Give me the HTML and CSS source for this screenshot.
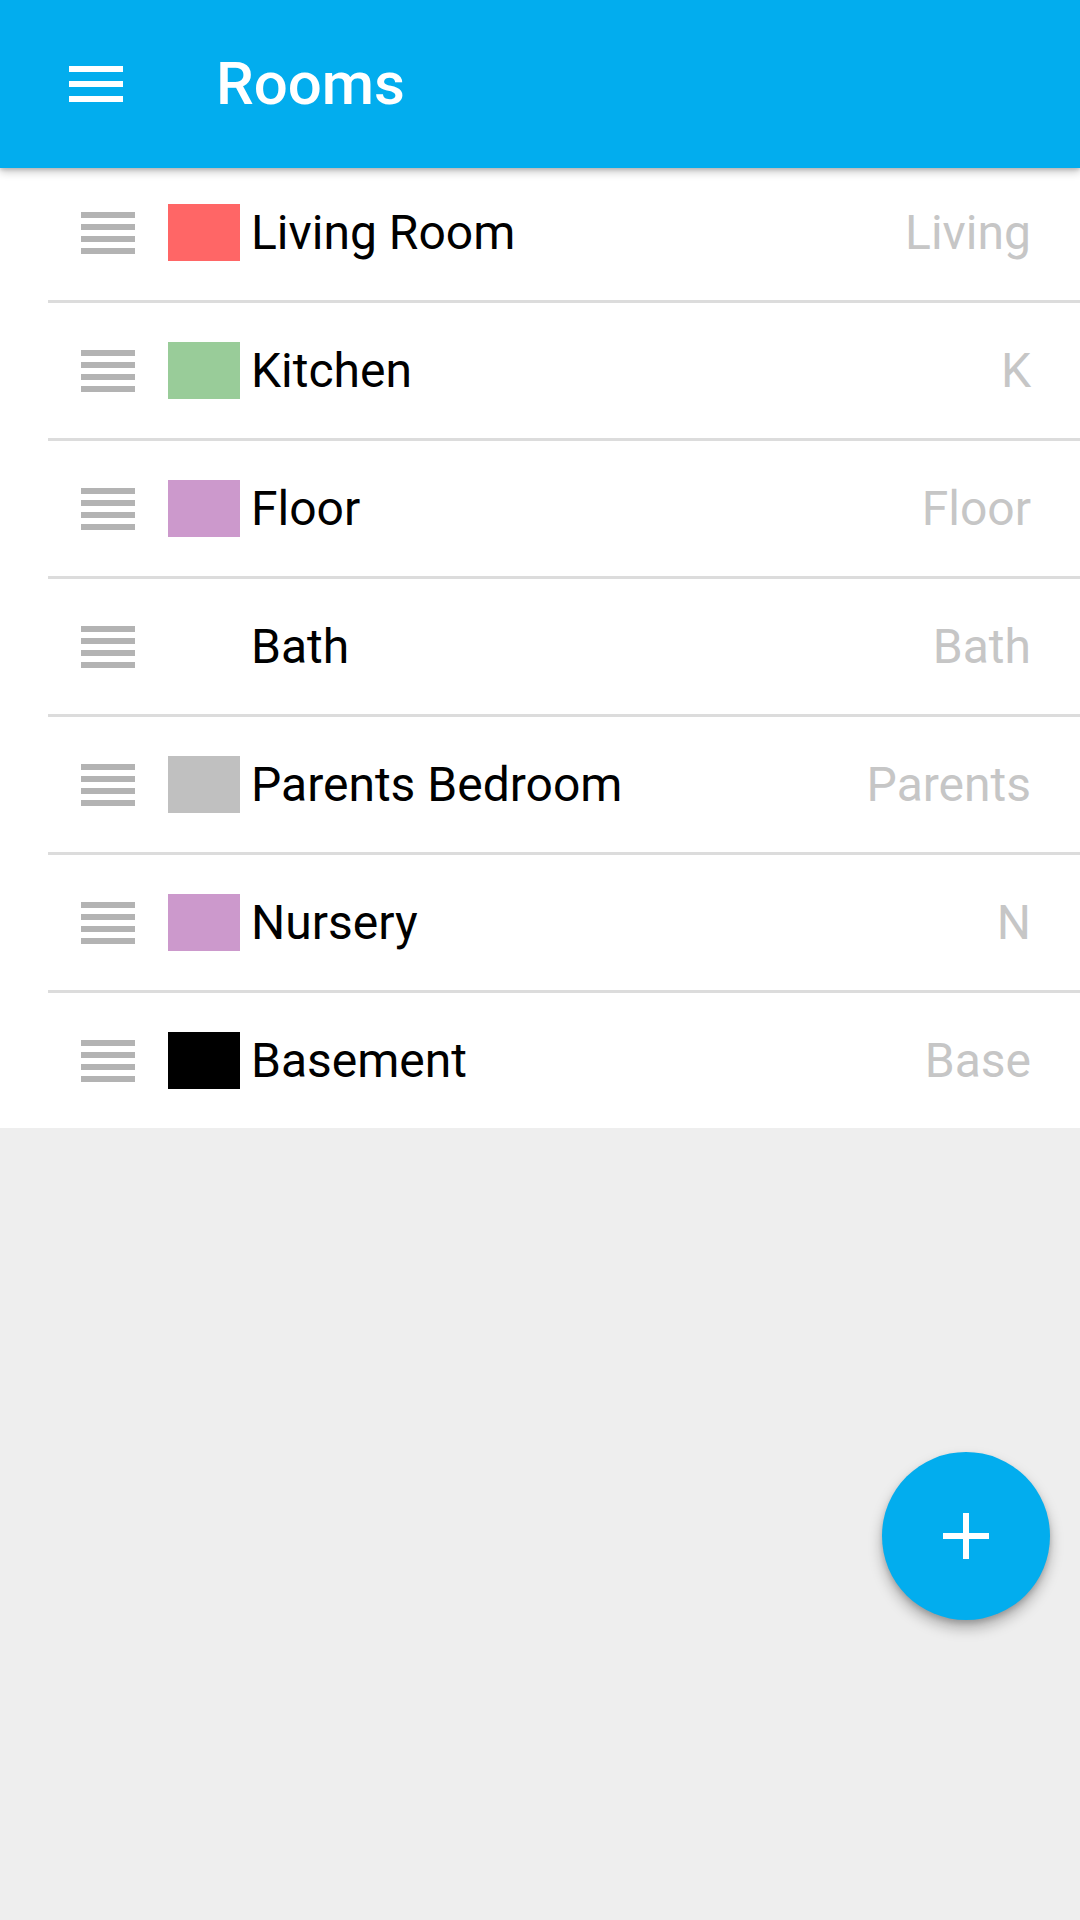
FILE: index.html
```html
<!DOCTYPE html>
<html lang="en">
<head>
<meta charset="utf-8">
<title>Rooms</title>
<link rel="stylesheet" href="styles.css">
</head>
<body>
<header class="toolbar">
  <svg class="menu-icon" viewBox="0 0 24 24" width="72" height="72" aria-hidden="true">
    <path fill="#ffffff" d="M3 18h18v-2H3v2zm0-5h18v-2H3v2zm0-7v2h18V6H3z"/>
  </svg>
  <h1 class="title">Rooms</h1>
</header>
<main class="list">
  <div class="row">
    <svg class="handle" viewBox="0 0 24 24" width="72" height="72" aria-hidden="true"><path fill="#b3b3b3" d="M3 15h18v-2H3v2zm0 4h18v-2H3v2zm0-8h18V9H3v2zm0-6v2h18V5H3z"/></svg>
    <span class="swatch swatch-red"></span>
    <span class="name">Living Room</span>
    <span class="short">Living</span>
  </div>
  <div class="row">
    <svg class="handle" viewBox="0 0 24 24" width="72" height="72" aria-hidden="true"><path fill="#b3b3b3" d="M3 15h18v-2H3v2zm0 4h18v-2H3v2zm0-8h18V9H3v2zm0-6v2h18V5H3z"/></svg>
    <span class="swatch swatch-green"></span>
    <span class="name">Kitchen</span>
    <span class="short">K</span>
  </div>
  <div class="row">
    <svg class="handle" viewBox="0 0 24 24" width="72" height="72" aria-hidden="true"><path fill="#b3b3b3" d="M3 15h18v-2H3v2zm0 4h18v-2H3v2zm0-8h18V9H3v2zm0-6v2h18V5H3z"/></svg>
    <span class="swatch swatch-purple"></span>
    <span class="name">Floor</span>
    <span class="short">Floor</span>
  </div>
  <div class="row">
    <svg class="handle" viewBox="0 0 24 24" width="72" height="72" aria-hidden="true"><path fill="#b3b3b3" d="M3 15h18v-2H3v2zm0 4h18v-2H3v2zm0-8h18V9H3v2zm0-6v2h18V5H3z"/></svg>
    <span class="swatch swatch-none"></span>
    <span class="name">Bath</span>
    <span class="short">Bath</span>
  </div>
  <div class="row">
    <svg class="handle" viewBox="0 0 24 24" width="72" height="72" aria-hidden="true"><path fill="#b3b3b3" d="M3 15h18v-2H3v2zm0 4h18v-2H3v2zm0-8h18V9H3v2zm0-6v2h18V5H3z"/></svg>
    <span class="swatch swatch-grey"></span>
    <span class="name">Parents Bedroom</span>
    <span class="short">Parents</span>
  </div>
  <div class="row">
    <svg class="handle" viewBox="0 0 24 24" width="72" height="72" aria-hidden="true"><path fill="#b3b3b3" d="M3 15h18v-2H3v2zm0 4h18v-2H3v2zm0-8h18V9H3v2zm0-6v2h18V5H3z"/></svg>
    <span class="swatch swatch-purple"></span>
    <span class="name">Nursery</span>
    <span class="short">N</span>
  </div>
  <div class="row">
    <svg class="handle" viewBox="0 0 24 24" width="72" height="72" aria-hidden="true"><path fill="#b3b3b3" d="M3 15h18v-2H3v2zm0 4h18v-2H3v2zm0-8h18V9H3v2zm0-6v2h18V5H3z"/></svg>
    <span class="swatch swatch-black"></span>
    <span class="name">Basement</span>
    <span class="short">Base</span>
  </div>
</main>
<button class="fab" type="button" aria-label="Add room">
  <svg viewBox="0 0 46 46" width="46" height="46" aria-hidden="true">
    <rect x="0" y="20" width="46" height="6" fill="#ffffff"/>
    <rect x="20" y="0" width="6" height="46" fill="#ffffff"/>
  </svg>
</button>
</body>
</html>
```
FILE: styles.css
```css
html, body {
  margin: 0;
  padding: 0;
}

body {
  width: 1080px;
  min-height: 1920px;
  background: #eeeeee;
  font-family: Roboto, "Noto Sans", "Liberation Sans", sans-serif;
  overflow: hidden;
}

.toolbar {
  position: relative;
  z-index: 2;
  height: 168px;
  background: #02adee;
  display: flex;
  align-items: center;
  padding-left: 60px;
  box-shadow: 0 4px 8px rgba(0, 0, 0, 0.22), 0 2px 3px rgba(0, 0, 0, 0.12);
}

.menu-icon {
  display: block;
  flex: none;
}

.title {
  margin: 0 0 0 84px;
  color: #ffffff;
  font-size: 60px;
  font-weight: 500;
  line-height: 1;
}

.list {
  position: relative;
  z-index: 1;
  margin-top: -3px;
  background: #ffffff;
}

.row {
  margin-left: 48px;
  height: 135px;
  display: flex;
  align-items: center;
  padding-left: 24px;
  padding-right: 49px;
  border-bottom: 3px solid #dcdcdc;
}

.row:last-child {
  border-bottom: none;
}

.handle {
  display: block;
  flex: none;
}

.swatch {
  flex: none;
  width: 72px;
  height: 57px;
  margin-left: 24px;
}

.swatch-red { background: #ff6666; }
.swatch-green { background: #99cc99; }
.swatch-purple { background: #cc99cc; }
.swatch-grey { background: #c0c0c0; }
.swatch-black { background: #000000; }
.swatch-none { background: transparent; }

.name {
  margin-left: 11px;
  font-size: 48px;
  color: #000000;
  line-height: 1;
}

.short {
  margin-left: auto;
  font-size: 48px;
  color: #c6c6c6;
  line-height: 1;
}

.fab {
  position: absolute;
  right: 30px;
  top: 1452px;
  width: 168px;
  height: 168px;
  border: none;
  border-radius: 50%;
  background: #02adee;
  padding: 0;
  display: flex;
  align-items: center;
  justify-content: center;
  box-shadow: 0 8px 14px rgba(0, 0, 0, 0.28), 0 3px 5px rgba(0, 0, 0, 0.14);
}

.fab svg {
  display: block;
}
```
